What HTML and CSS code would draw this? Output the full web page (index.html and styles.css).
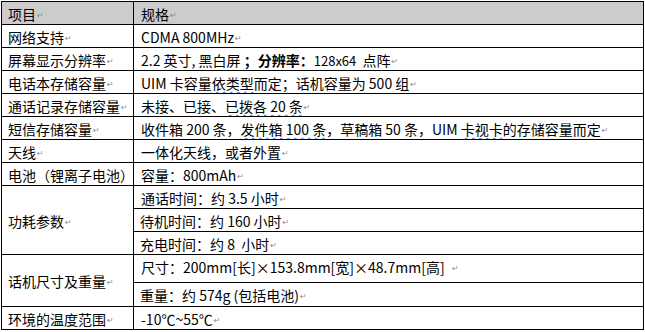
FILE: index.html
```html
<!DOCTYPE html>
<html lang="zh">
<head>
<meta charset="utf-8">
<title>规格表</title>
<link rel="stylesheet" href="styles.css">
</head>
<body>
<table class="spec">
  <colgroup><col class="c1"><col class="c2"></colgroup>
  <tr class="head"><td>项目<span class="pm">↵</span></td><td>规格<span class="pm">↵</span></td></tr>
  <tr><td>网络支持<span class="pm">↵</span></td><td>CDMA 800MHz<span class="pm">↵</span></td></tr>
  <tr><td>屏幕显示分辨率<span class="pm">↵</span></td><td>2.2 英寸, 黑白屏 <b>；分辨率：</b><span class="sm">128x64</span>&nbsp; 点阵<span class="pm">↵</span></td></tr>
  <tr><td>电话本存储容量<span class="pm">↵</span></td><td>UIM 卡容量<span class="wavy">依类型</span>而定；话机容量为 500 组<span class="pm">↵</span></td></tr>
  <tr><td>通话记录存储容量<span class="pm">↵</span></td><td>未接、已接、<span class="wavy">已拨各 20 条</span><span class="pm">↵</span></td></tr>
  <tr><td>短信存储容量<span class="pm">↵</span></td><td>收件箱 200 条，<span class="wavy">发件箱 100 条</span>，草稿箱 50 条，UIM <span class="wavy">卡视卡</span>的存储容量而定<span class="pm">↵</span></td></tr>
  <tr><td>天线<span class="pm">↵</span></td><td>一体化天线，或者外置<span class="pm">↵</span></td></tr>
  <tr><td>电池（锂离子电池）<span class="pm">↵</span></td><td>容量：800mAh<span class="pm">↵</span></td></tr>
  <tr><td rowspan="3">功耗参数<span class="pm">↵</span></td><td>通话时间：约 3.5 小时<span class="pm">↵</span></td></tr>
  <tr><td>待机时间：约 160 小时<span class="pm">↵</span></td></tr>
  <tr><td>充电时间：约 8&nbsp; 小时<span class="pm">↵</span></td></tr>
  <tr class="tall"><td rowspan="2">话机尺寸及重量<span class="pm">↵</span></td><td class="top">尺寸：200mm[长]×153.8mm[宽]×48.7mm[高]&nbsp; <span class="pm">↵</span></td></tr>
  <tr class="mid"><td>重量：约 574g (包括电池)<span class="pm">↵</span></td></tr>
  <tr><td>环境的温度范围<span class="pm">↵</span></td><td>-10℃~55℃<span class="pm">↵</span></td></tr>
</table>
</body>
</html>
```

FILE: styles.css
```css
html, body {
  margin: 0;
  padding: 0;
  background: #ffffff;
}
body {
  padding: 1px 0 0 1px;
  font-family: "Noto Sans CJK SC", "Noto Sans", sans-serif;
  font-size: 14px;
  color: #000000;
}
.spec {
  border-collapse: collapse;
  table-layout: fixed;
  width: 642px;
}
.c1 { width: 132px; }
.c2 { width: 510px; }
.spec td {
  border: 1px solid #000000;
  height: 21px;
  padding: 1px 4px 0 6px;
  line-height: 16px;
  white-space: nowrap;
  overflow: hidden;
  vertical-align: middle;
  box-sizing: content-box;
}
.spec td + td { padding-left: 7px; }
.head td { background: #cccccc; }
.tall td.top { height: 23px; vertical-align: top; padding-top: 4px; }
.mid td { height: 22px; }
.pm {
  font-family: "DejaVu Sans", sans-serif;
  font-size: 8px;
  line-height: 0;
  color: #8a8a8a;
  margin-left: 1px;
  vertical-align: 2px;
}
b { font-weight: 700; line-height: 0; }
.sm { font-size: 13px; line-height: 0; }
.wavy {
  text-decoration: underline wavy #3b6fd6;
  text-decoration-thickness: 1px;
  text-underline-offset: 2px;
}
```
